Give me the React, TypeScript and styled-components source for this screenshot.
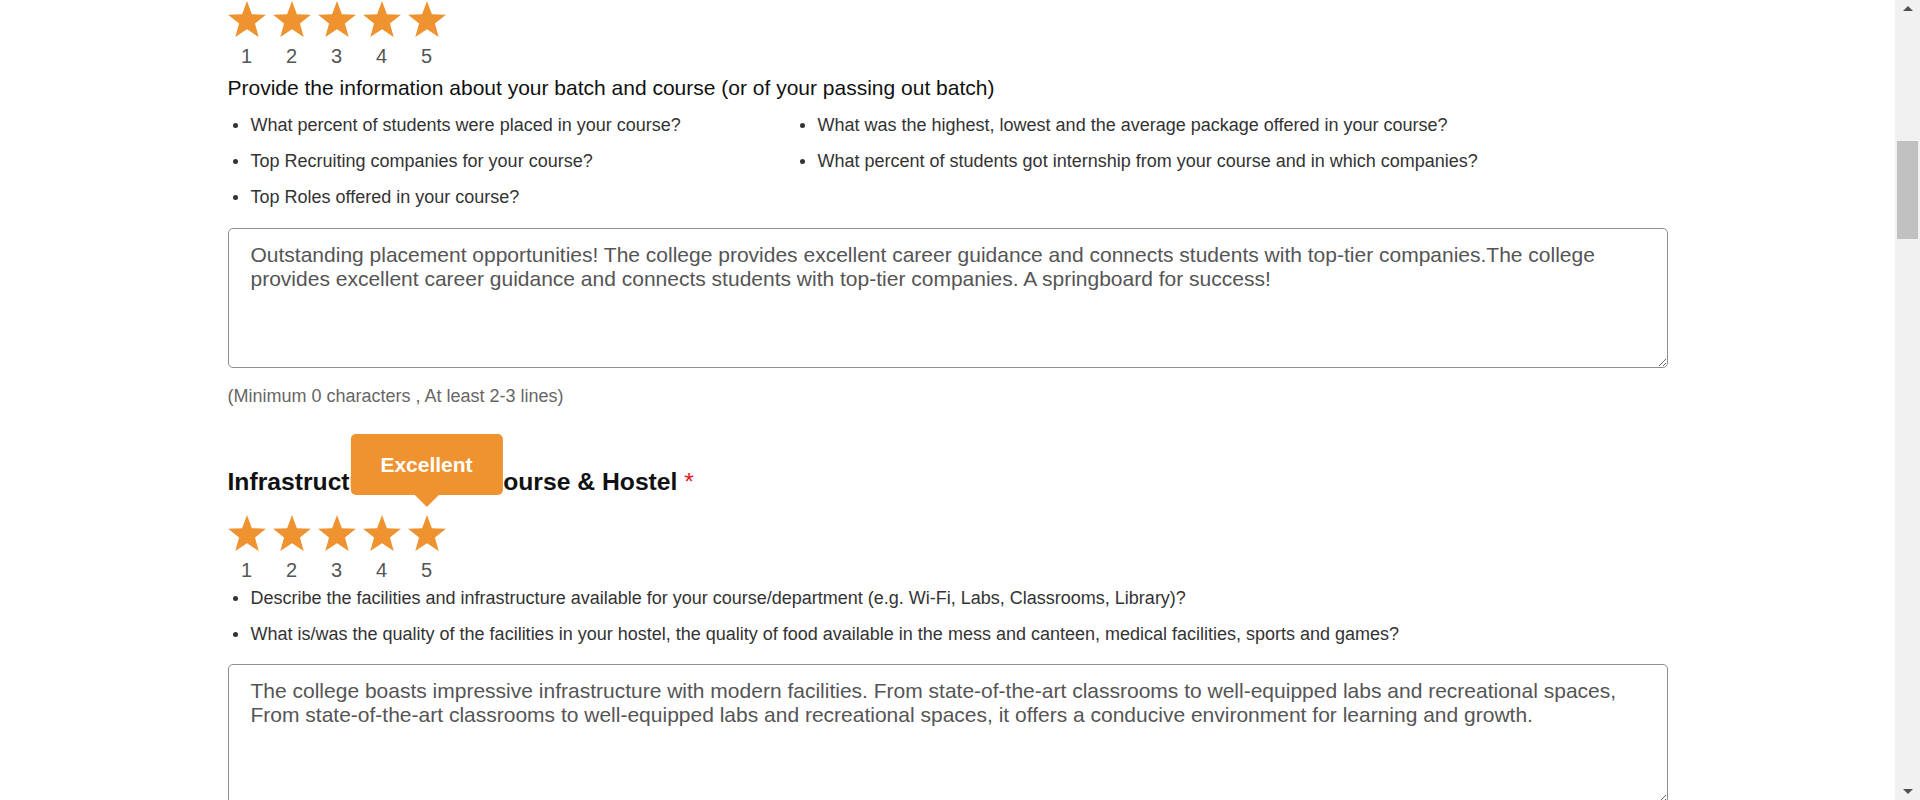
import React from 'react';
import styled, { createGlobalStyle } from 'styled-components';

const GlobalStyle = createGlobalStyle`
	html, body {
		margin: 0;
		padding: 0;
		background: #fff;
		overflow: hidden;
	}
	body {
		font-family: 'Liberation Sans', Arial, sans-serif;
		color: #111;
	}
`;

const orange = '#ef9330';

const Page = styled.div`
	display: flex;
	height: 100vh;
	overflow: hidden;
`;

const Main = styled.main`
	flex: 1;
	overflow: hidden;
`;

const Container = styled.div`
	width: 1440px;
	margin: 0 auto;
`;

const Section = styled.section<{ $gap: number }>`
	margin-top: ${({ $gap }) => $gap}px;
`;

const Heading = styled.h3`
	margin: 0 0 18px;
	font-size: 24.7px;
	line-height: 30px;
	font-weight: 700;
	color: #111;

	span {
		color: #e41b1b;
		font-weight: 400;
	}
`;

const StarRow = styled.div`
	display: flex;
	gap: 7px;
`;

const StarItem = styled.div`
	position: relative;
	display: flex;
	flex-direction: column;
	align-items: center;
	width: 38px;
`;

const StarNum = styled.span`
	margin-top: 7px;
	font-size: 20px;
	line-height: 24px;
	color: #555;
`;

const Tip = styled.div`
	position: absolute;
	left: 50%;
	bottom: calc(100% + 20px);
	transform: translateX(-50%);
	z-index: 2;
	display: flex;
	align-items: center;
	justify-content: center;
	height: 61px;
	padding: 0 30px;
	border-radius: 5px;
	background: ${orange};
	color: #fff;
	font-size: 21px;
	font-weight: 700;
	white-space: nowrap;

	&::after {
		content: '';
		position: absolute;
		top: 100%;
		left: 50%;
		transform: translateX(-50%);
		border-left: 12px solid transparent;
		border-right: 12px solid transparent;
		border-top: 12px solid ${orange};
	}
`;

const Prompt = styled.p`
	margin: 8px 0 0;
	font-size: 21px;
	line-height: 24px;
	color: #111;
`;

const QuestionList = styled.ul<{ $cols: string; $top: number }>`
	display: grid;
	grid-template-columns: ${({ $cols }) => $cols};
	row-gap: 14px;
	list-style: none;
	margin: ${({ $top }) => $top}px 0 0;
	padding: 0;
`;

const Question = styled.li`
	display: flex;
	align-items: center;
	gap: 13px;
	padding-left: 5px;
	font-size: 18px;
	line-height: 22px;
	color: #333;

	&::before {
		content: '';
		flex: none;
		width: 5px;
		height: 5px;
		border-radius: 50%;
		background: #333;
	}
`;

const Review = styled.textarea<{ $top: number }>`
	display: block;
	box-sizing: border-box;
	width: 100%;
	height: 140px;
	margin-top: ${({ $top }) => $top}px;
	padding: 14px 22px;
	border: 1px solid #8f8f8f;
	border-radius: 5px;
	font-family: 'Liberation Sans', Arial, sans-serif;
	font-size: 21px;
	line-height: 24px;
	color: #555;
	background: #fff;
	outline: none;
`;

const Hint = styled.p`
	margin: 17px 0 0;
	font-size: 18px;
	line-height: 22px;
	color: #666;
`;

const Scrollbar = styled.div`
	flex: none;
	display: flex;
	flex-direction: column;
	align-items: center;
	width: 25px;
	background: #f1f1f1;
`;

const ArrowBtn = styled.div<{ $down?: boolean }>`
	display: flex;
	align-items: center;
	justify-content: center;
	height: 17px;
	width: 100%;

	&::before {
		content: '';
		border-left: 5px solid transparent;
		border-right: 5px solid transparent;
		${({ $down }) => ($down ? 'border-top: 5px solid #505050;' : 'border-bottom: 5px solid #505050;')}
	}
`;

const Track = styled.div`
	flex: 1;
	width: 100%;
	padding-top: 124px;
	display: flex;
	justify-content: center;
`;

const Thumb = styled.div`
	width: 21px;
	height: 98px;
	background: #c1c1c1;
`;

const Star = ({ filled }: { filled: boolean }) => (
	<svg width='38' height='36' viewBox='0.98 0 38.04 36.18' style={{ display: 'block' }}>
		<polygon
			points='20,0 24.94,13.2 39.02,13.82 27.99,22.6 31.76,36.18 20,28.4 8.24,36.18 12.01,22.6 0.98,13.82 15.06,13.2'
			fill={filled ? orange : '#d9d9d9'}
		/>
	</svg>
);

const Rating = ({ value, tip }: { value: number; tip?: string }) => (
	<StarRow>
		{[1, 2, 3, 4, 5].map(n => (
			<StarItem key={n}>
				{tip && n === value && <Tip>{tip}</Tip>}
				<Star filled={n <= value} />
				<StarNum>{n}</StarNum>
			</StarItem>
		))}
	</StarRow>
);

const placementQuestions = [
	'What percent of students were placed in your course?',
	'What was the highest, lowest and the average package offered in your course?',
	'Top Recruiting companies for your course?',
	'What percent of students got internship from your course and in which companies?',
	'Top Roles offered in your course?'
];

const infraQuestions = [
	'Describe the facilities and infrastructure available for your course/department (e.g. Wi-Fi, Labs, Classrooms, Library)?',
	'What is/was the quality of the facilities in your hostel, the quality of food available in the mess and canteen, medical facilities, sports and games?'
];

const App = () => (
	<>
		<GlobalStyle />
		<Page>
			<Main>
				<Container>
					<Section $gap={1}>
						<Rating value={5} />
						<Prompt>Provide the information about your batch and course (or of your passing out batch)</Prompt>
						<QuestionList $cols='567px 1fr' $top={14}>
							{placementQuestions.map(q => (
								<Question key={q}>{q}</Question>
							))}
						</QuestionList>
						<Review
							$top={20}
							spellCheck={false}
							defaultValue='Outstanding placement opportunities! The college provides excellent career guidance and connects students with top-tier companies.The college provides excellent career guidance and connects students with top-tier companies. A springboard for success!'
						/>
						<Hint>(Minimum 0 characters , At least 2-3 lines)</Hint>
					</Section>

					<Section $gap={60}>
						<Heading>
							Infrastructure of your Course &amp; Hostel <span>*</span>
						</Heading>
						<Rating value={5} tip='Excellent' />
						<QuestionList $cols='1fr' $top={5}>
							{infraQuestions.map(q => (
								<Question key={q}>{q}</Question>
							))}
						</QuestionList>
						<Review
							$top={19}
							spellCheck={false}
							defaultValue='The college boasts impressive infrastructure with modern facilities. From state-of-the-art classrooms to well-equipped labs and recreational spaces, From state-of-the-art classrooms to well-equipped labs and recreational spaces, it offers a conducive environment for learning and growth.'
						/>
					</Section>
				</Container>
			</Main>
			<Scrollbar>
				<ArrowBtn />
				<Track>
					<Thumb />
				</Track>
				<ArrowBtn $down />
			</Scrollbar>
		</Page>
	</>
);

export default App;
